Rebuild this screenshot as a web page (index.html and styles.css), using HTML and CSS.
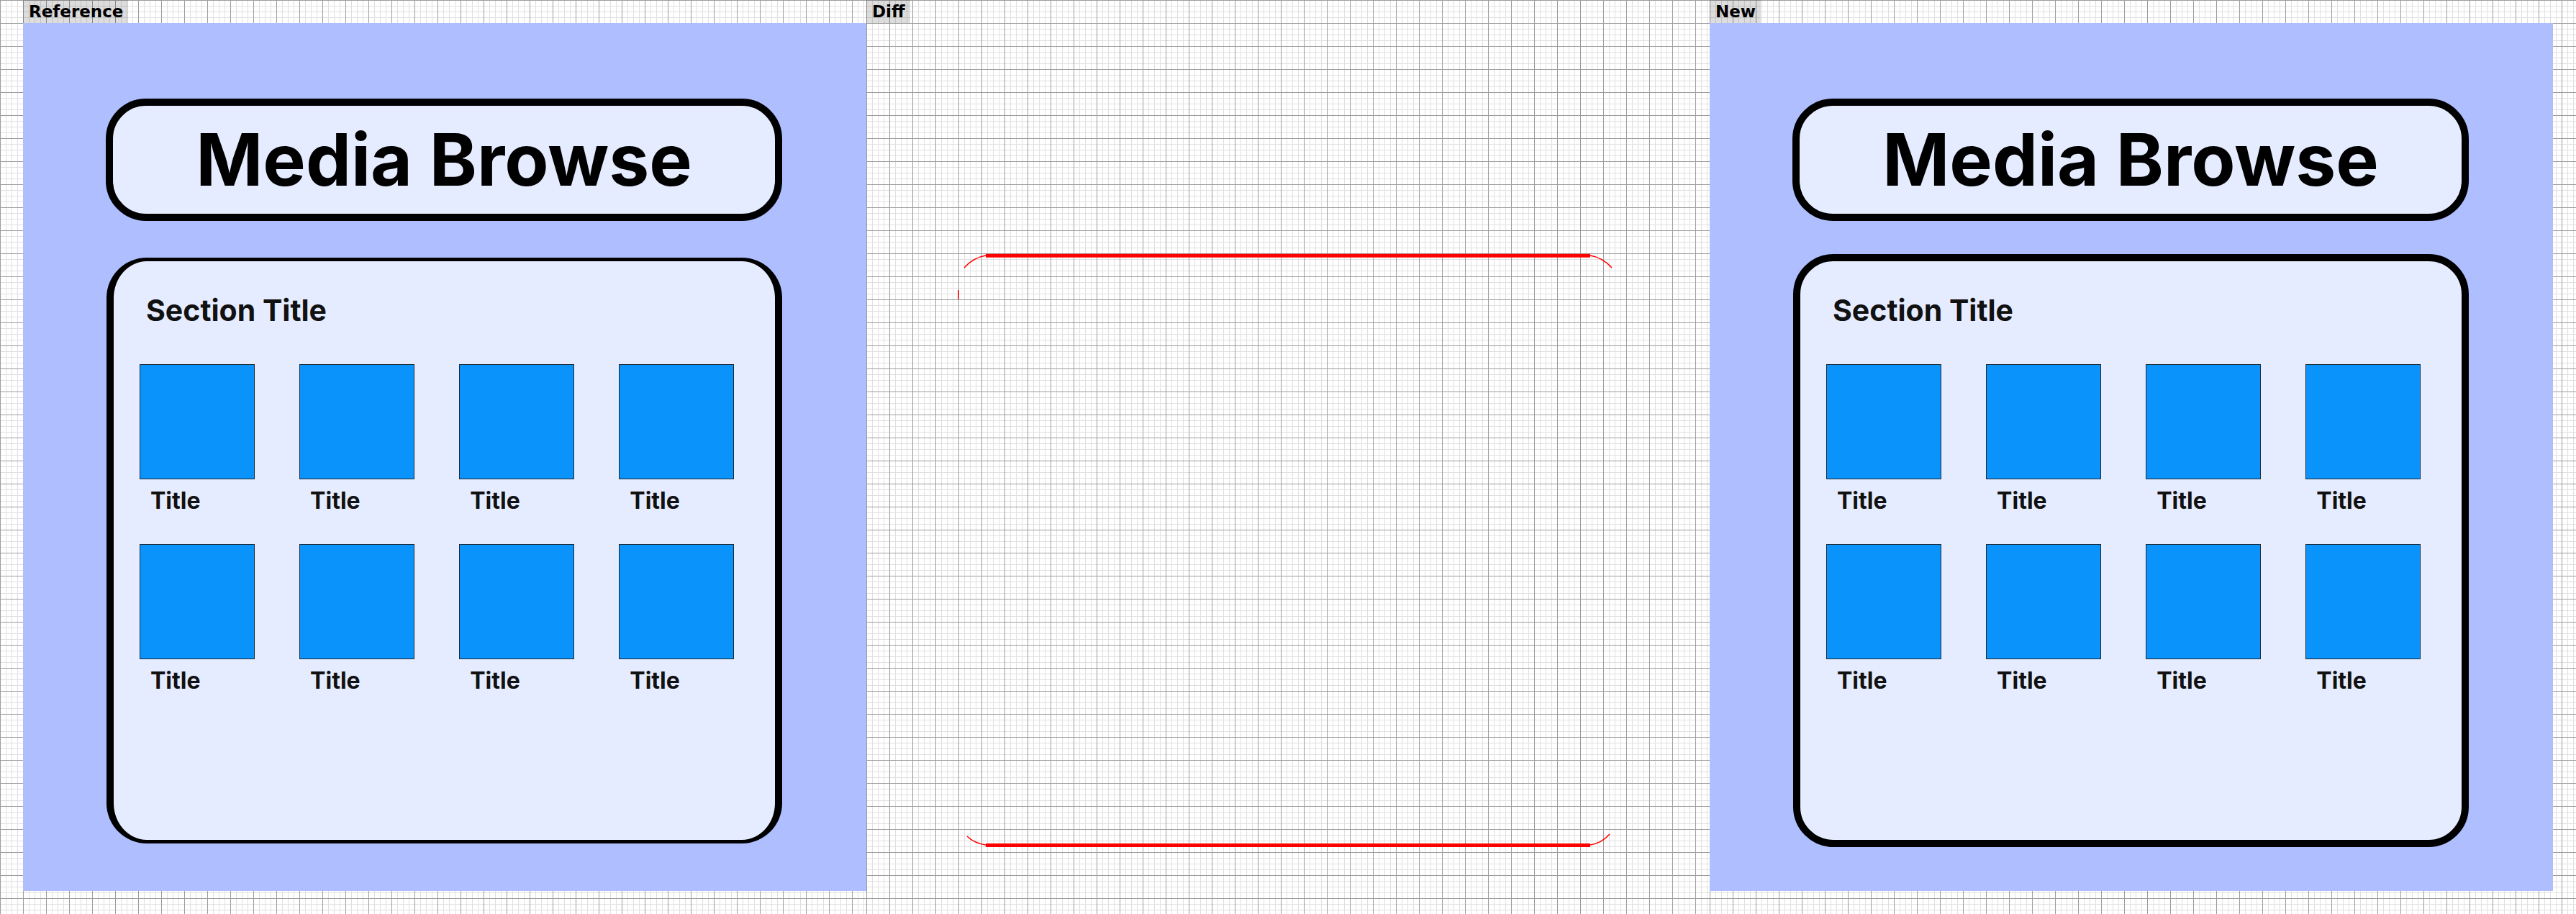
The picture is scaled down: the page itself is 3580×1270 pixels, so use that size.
FILE: index.html
```html
<!DOCTYPE html>
<html lang="en">
<head>
<meta charset="utf-8">
<title>Media Browse comparison</title>
<link rel="stylesheet" href="styles.css">
</head>
<body>
<div class="board">
  <div class="col">
    <div class="tag">Reference</div>
    <div class="shot">
      <div class="hdr"><h1 class="hdr-title">Media Browse</h1></div>
      <section class="card card-ref">
        <h2 class="sec-title">Section Title</h2>
        <div class="tiles">
          <div class="tile"><div class="thumb"></div><div class="cap">Title</div></div>
          <div class="tile"><div class="thumb"></div><div class="cap">Title</div></div>
          <div class="tile"><div class="thumb"></div><div class="cap">Title</div></div>
          <div class="tile"><div class="thumb"></div><div class="cap">Title</div></div>
          <div class="tile"><div class="thumb"></div><div class="cap">Title</div></div>
          <div class="tile"><div class="thumb"></div><div class="cap">Title</div></div>
          <div class="tile"><div class="thumb"></div><div class="cap">Title</div></div>
          <div class="tile"><div class="thumb"></div><div class="cap">Title</div></div>
        </div>
      </section>
    </div>
  </div>
  <div class="col">
    <div class="tag">Diff</div>
    <div class="diff">
      <svg class="diff-svg" width="1172" height="1206" viewBox="0 0 1172 1206">
        <g fill="none" stroke="#ff0000">
          <path d="M136 340 Q148 326 168 322.5" stroke-width="1.5"/>
          <path d="M166 323.2 H1006" stroke-width="5"/>
          <path d="M1004 322.5 Q1024 326 1036 340" stroke-width="1.5"/>
          <path d="M128 371 V384" stroke-width="1.5"/>
          <path d="M140 1130 Q150 1140 168 1142.5" stroke-width="1.5"/>
          <path d="M166 1142.5 H1006" stroke-width="5"/>
          <path d="M1004 1142.5 Q1022 1140 1033 1127" stroke-width="1.5"/>
        </g>
      </svg>
    </div>
  </div>
  <div class="col col-last">
    <div class="tag">New</div>
    <div class="shot">
      <div class="hdr"><h1 class="hdr-title">Media Browse</h1></div>
      <section class="card card-new">
        <h2 class="sec-title">Section Title</h2>
        <div class="tiles">
          <div class="tile"><div class="thumb"></div><div class="cap">Title</div></div>
          <div class="tile"><div class="thumb"></div><div class="cap">Title</div></div>
          <div class="tile"><div class="thumb"></div><div class="cap">Title</div></div>
          <div class="tile"><div class="thumb"></div><div class="cap">Title</div></div>
          <div class="tile"><div class="thumb"></div><div class="cap">Title</div></div>
          <div class="tile"><div class="thumb"></div><div class="cap">Title</div></div>
          <div class="tile"><div class="thumb"></div><div class="cap">Title</div></div>
          <div class="tile"><div class="thumb"></div><div class="cap">Title</div></div>
        </div>
      </section>
    </div>
  </div>
</div>
</body>
</html>
```
FILE: styles.css
```css
html, body {
  margin: 0;
  padding: 0;
}

.board,
.col {
  background-color: #ffffff;
  background-image:
    linear-gradient(to right, #9c9c9c 1px, transparent 1px),
    linear-gradient(to bottom, #9c9c9c 1px, transparent 1px),
    linear-gradient(to right, #e0e0e0 1px, transparent 1px),
    linear-gradient(to bottom, #e0e0e0 1px, transparent 1px);
  background-size: 32px 32px, 32px 32px, 8px 8px, 8px 8px;
}

.board {
  width: 3580px;
  height: 1270px;
  box-sizing: border-box;
  padding-left: 32px;
  display: flex;
  overflow: hidden;
}

.col {
  width: 1172px;
  height: 1270px;
  flex: none;
  display: flex;
  flex-direction: column;
  align-items: flex-start;
}

.col-last {
  flex: 1;
}

.tag {
  height: 32px;
  line-height: 32px;
  padding: 0 7px 0 8px;
  background: rgba(0, 0, 0, 0.135);
  font-family: "DejaVu Sans", sans-serif;
  font-weight: 700;
  font-size: 23px;
  color: #000000;
  white-space: nowrap;
}

.shot {
  width: 1172px;
  height: 1206px;
  box-sizing: border-box;
  background: #aebeff;
  padding: 105px 0 0 115px;
  display: flex;
  flex-direction: column;
  align-items: flex-start;
}

.diff {
  width: 1172px;
  height: 1206px;
}

.diff-svg {
  display: block;
}

.hdr {
  width: 940px;
  height: 170px;
  box-sizing: border-box;
  border: 10px solid #000000;
  border-radius: 56px;
  background: #e6ecff;
  display: flex;
  align-items: center;
  justify-content: center;
}

.hdr-title {
  margin: 0;
  font-family: Inter, "Noto Sans", sans-serif;
  font-weight: 700;
  font-size: 100px;
  line-height: 120px;
  color: #000000;
}

.card {
  margin-left: 1px;
  height: 804px;
  box-sizing: content-box;
  border-style: solid;
  border-color: #000000;
  border-radius: 56px;
  background: #e6ecff;
  padding: 0;
}

.card-ref {
  width: 919px;
  margin-top: 51px;
  border-width: 5px 10px;
}

.card-new {
  width: 919px;
  margin-top: 46px;
  border-width: 10px;
}

.sec-title {
  margin: 43px 0 0 45px;
  font-family: Inter, "Noto Sans", sans-serif;
  font-weight: 700;
  font-size: 41px;
  line-height: 50px;
  color: #111111;
}

.tiles {
  margin: 50px 0 0 36px;
  display: grid;
  grid-template-columns: repeat(4, 159.5px);
  column-gap: 62.6px;
  row-gap: 40px;
}

.thumb {
  width: 159.5px;
  height: 160px;
  box-sizing: border-box;
  background: #0a93fa;
  border: 1.5px solid #1c2935;
}

.cap {
  margin-top: 10px;
  padding-left: 15px;
  font-family: Inter, "Noto Sans", sans-serif;
  font-weight: 700;
  font-size: 32px;
  line-height: 40px;
  color: #111111;
}
```
